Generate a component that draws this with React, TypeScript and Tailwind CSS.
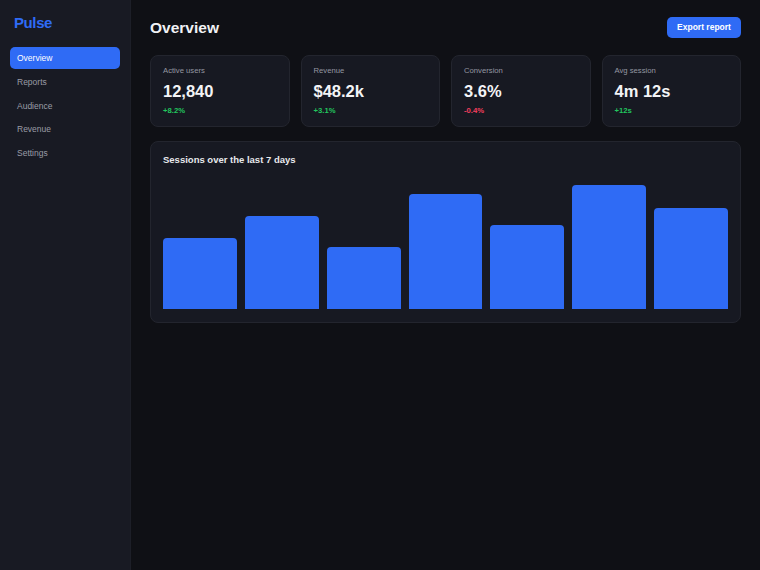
import React from 'react';

const navItems = ['Overview', 'Reports', 'Audience', 'Revenue', 'Settings'];

const stats = [
  { label: 'Active users', value: '12,840', delta: '+8.2%', up: true },
  { label: 'Revenue', value: '$48.2k', delta: '+3.1%', up: true },
  { label: 'Conversion', value: '3.6%', delta: '-0.4%', up: false },
  { label: 'Avg session', value: '4m 12s', delta: '+12s', up: true },
];

// bar heights in px for the last 7 days
const sessions = [71, 93, 62, 115, 84, 124, 101];

const App: React.FC = () => {
  return (
    <div
      className="flex min-h-[570px] w-full bg-[#0f1015] text-white"
      style={{ fontFamily: '"Liberation Sans", Arial, sans-serif' }}
    >
      {/* Sidebar */}
      <aside className="w-[131px] shrink-0 bg-[#181a23] border-r border-[#1d1f28] px-[10px] pt-[13px]">
        <div className="pl-[4px] text-[15px] font-bold tracking-[-0.4px] text-[#2f6bf5] leading-[20px]">Pulse</div>
        <nav className="mt-[14px] flex flex-col gap-[1.75px]">
          {navItems.map((item, i) => (
            <div
              key={item}
              className={`h-[22px] rounded-[5px] px-[7px] text-[8.5px] leading-[22px] ${
                i === 0 ? 'bg-[#2f6bf5] text-white' : 'text-[#9a9ca6]'
              }`}
            >
              {item}
            </div>
          ))}
        </nav>
      </aside>

      {/* Main content */}
      <main className="flex-1 px-[19px] pt-[17px]">
        <div className="flex items-center justify-between">
          <h1 className="text-[15.5px] font-bold leading-[21px] text-[#f1f2f5]">Overview</h1>
          <button className="h-[21px] w-[74px] rounded-[5px] bg-[#2f6bf5] text-[8.5px] font-bold text-white">
            Export report
          </button>
        </div>

        <div className="mt-[17px] grid grid-cols-4 gap-[11px]">
          {stats.map((s) => (
            <div
              key={s.label}
              className="h-[72px] rounded-[8px] border border-[#23252e] bg-[#171922] px-[12px] pt-[10px]"
            >
              <div className="text-[7.7px] leading-[10px] text-[#9497a1]">{s.label}</div>
              <div className="mt-[5px] text-[16.5px] font-bold leading-[20px] text-[#f3f4f6]">{s.value}</div>
              <div
                className={`mt-[4.5px] text-[7.7px] font-bold leading-[10px] ${
                  s.up ? 'text-[#22c55e]' : 'text-[#f43f5e]'
                }`}
              >
                {s.delta}
              </div>
            </div>
          ))}
        </div>

        <div className="mt-[14px] rounded-[8px] border border-[#23252e] bg-[#171922] px-[12px] pt-[12px] pb-[13px]">
          <h2 className="text-[9.5px] font-bold leading-[12px] text-[#e8e9ed]">Sessions over the last 7 days</h2>
          <div className="mt-[19px] flex h-[124px] items-end gap-[8px]">
            {sessions.map((h, i) => (
              <div
                key={i}
                className="flex-1 rounded-t-[4px] bg-[#2f6bf5]"
                style={{ height: `${h}px` }}
              />
            ))}
          </div>
        </div>
      </main>
    </div>
  );
};

export default App;
